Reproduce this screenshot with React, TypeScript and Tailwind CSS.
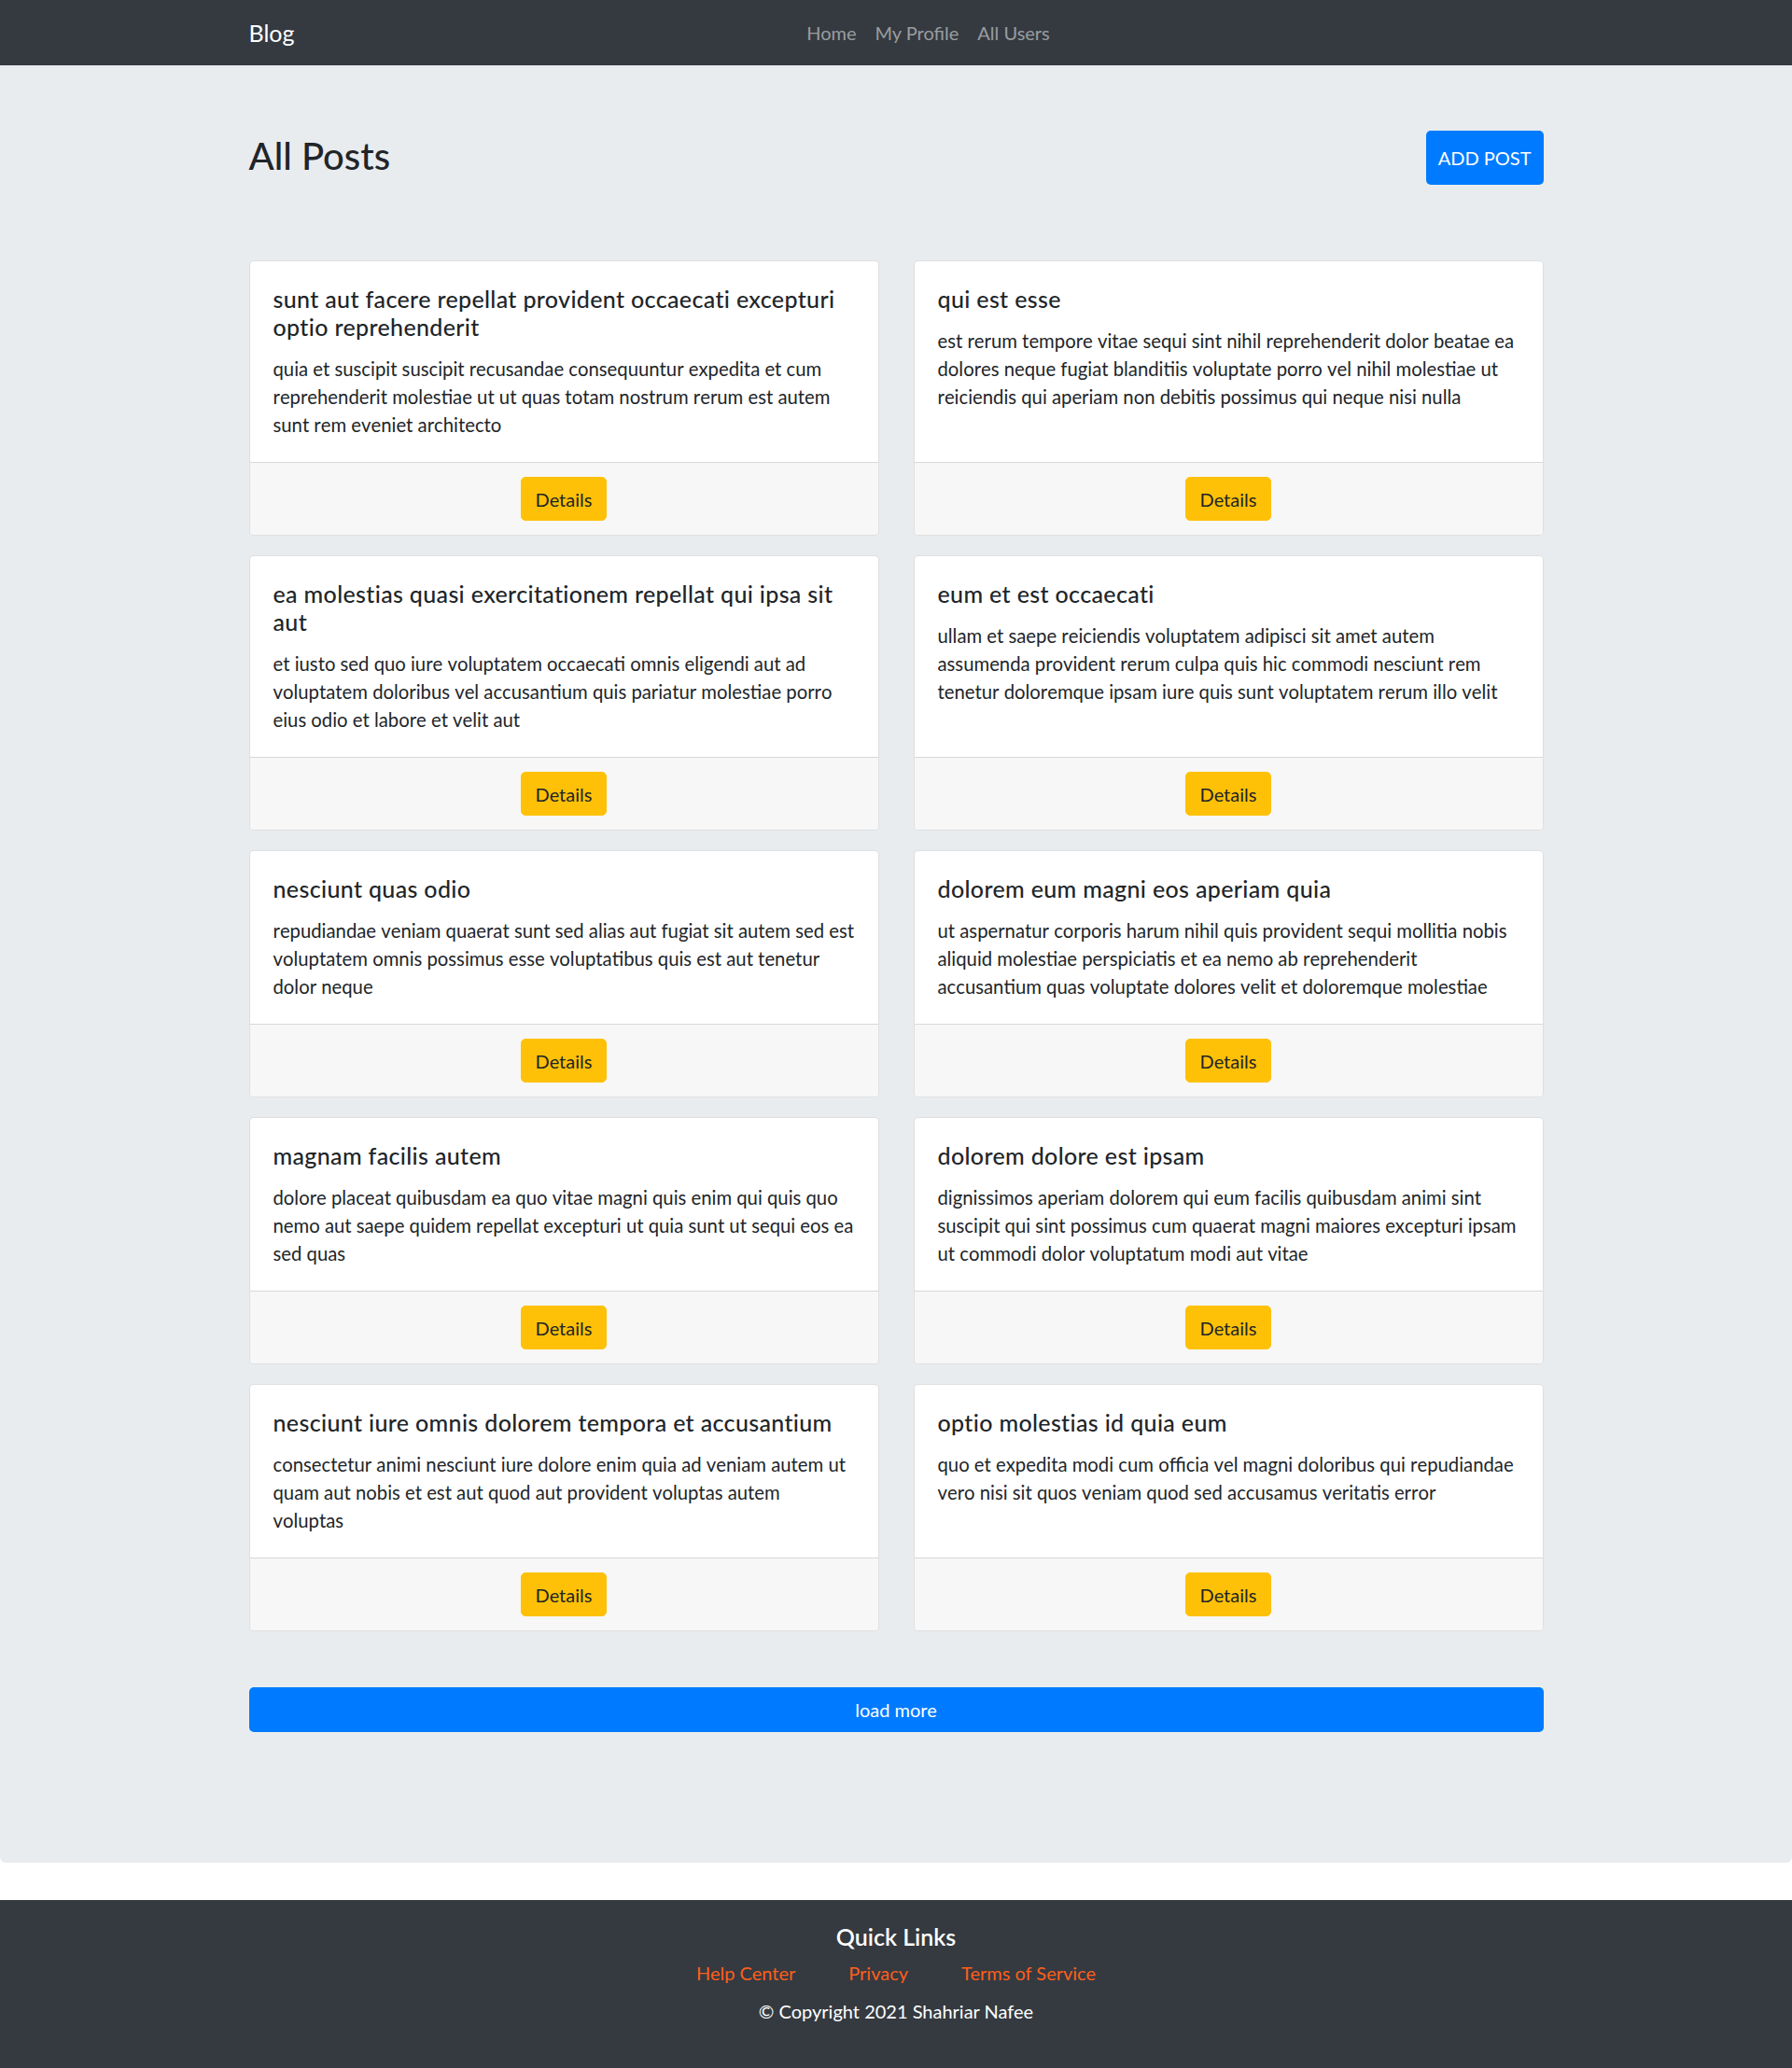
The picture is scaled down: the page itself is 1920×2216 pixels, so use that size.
import React from 'react';

const posts = [
  {
    title: 'sunt aut facere repellat provident occaecati excepturi optio reprehenderit',
    body: 'quia et suscipit suscipit recusandae consequuntur expedita et cum reprehenderit molestiae ut ut quas totam nostrum rerum est autem sunt rem eveniet architecto',
  },
  {
    title: 'qui est esse',
    body: 'est rerum tempore vitae sequi sint nihil reprehenderit dolor beatae ea dolores neque fugiat blanditiis voluptate porro vel nihil molestiae ut reiciendis qui aperiam non debitis possimus qui neque nisi nulla',
  },
  {
    title: 'ea molestias quasi exercitationem repellat qui ipsa sit aut',
    body: 'et iusto sed quo iure voluptatem occaecati omnis eligendi aut ad voluptatem doloribus vel accusantium quis pariatur molestiae porro eius odio et labore et velit aut',
  },
  {
    title: 'eum et est occaecati',
    body: 'ullam et saepe reiciendis voluptatem adipisci sit amet autem assumenda provident rerum culpa quis hic commodi nesciunt rem tenetur doloremque ipsam iure quis sunt voluptatem rerum illo velit',
  },
  {
    title: 'nesciunt quas odio',
    body: 'repudiandae veniam quaerat sunt sed alias aut fugiat sit autem sed est voluptatem omnis possimus esse voluptatibus quis est aut tenetur dolor neque',
  },
  {
    title: 'dolorem eum magni eos aperiam quia',
    body: 'ut aspernatur corporis harum nihil quis provident sequi mollitia nobis aliquid molestiae perspiciatis et ea nemo ab reprehenderit accusantium quas voluptate dolores velit et doloremque molestiae',
  },
  {
    title: 'magnam facilis autem',
    body: 'dolore placeat quibusdam ea quo vitae magni quis enim qui quis quo nemo aut saepe quidem repellat excepturi ut quia sunt ut sequi eos ea sed quas',
  },
  {
    title: 'dolorem dolore est ipsam',
    body: 'dignissimos aperiam dolorem qui eum facilis quibusdam animi sint suscipit qui sint possimus cum quaerat magni maiores excepturi ipsam ut commodi dolor voluptatum modi aut vitae',
  },
  {
    title: 'nesciunt iure omnis dolorem tempora et accusantium',
    body: 'consectetur animi nesciunt iure dolore enim quia ad veniam autem ut quam aut nobis et est aut quod aut provident voluptas autem voluptas',
  },
  {
    title: 'optio molestias id quia eum',
    body: 'quo et expedita modi cum officia vel magni doloribus qui repudiandae vero nisi sit quos veniam quod sed accusamus veritatis error',
  },
];

const PostCard = ({ title, body }: { title: string; body: string }) => (
  <div className="flex flex-col rounded-[5px] border border-black/[.125] bg-white">
    <div className="flex-1 p-[25px]">
      <h5 className="mb-[15px] text-[25px] font-medium leading-[30px] tracking-[0.35px]">{title}</h5>
      <p className="text-[20.3px] leading-[30px] [font-kerning:none]">{body}</p>
    </div>
    <div className="rounded-b-[5px] border-t border-black/[.125] bg-[#f7f7f7] px-[25px] py-[15px] text-center">
      <button className="rounded-[5px] border border-[#ffc107] bg-[#ffc107] px-[15px] py-[7.5px] text-[20px] leading-[30px] text-[#212529]">
        Details
      </button>
    </div>
  </div>
);

export default function App() {
  return (
    <div className="min-h-screen bg-white font-['Lato',sans-serif] text-[#212529]">
      <nav className="h-[70px] bg-[#343a40]">
        <div className="mx-auto flex h-full w-[1387px] items-center">
          <a href="#" className="mr-5 text-[25px] leading-[30px] text-white">
            Blog
          </a>
          <ul className="mx-auto flex">
            <li>
              <a href="#" className="px-[10px] text-[20px] leading-[30px] text-white/50">
                Home
              </a>
            </li>
            <li>
              <a href="#" className="px-[10px] text-[20px] leading-[30px] text-white/50">
                My Profile
              </a>
            </li>
            <li>
              <a href="#" className="px-[10px] text-[20px] leading-[30px] text-white/50">
                All Users
              </a>
            </li>
          </ul>
        </div>
      </nav>

      <main className="mb-[40px] rounded-b-[6px] bg-[#e9ecef] pb-[140px] pt-[70px]">
        <div className="mx-auto w-[1387px]">
          <div className="flex h-[58px] items-center justify-between">
            <h2 className="pb-[5px] text-[40px] font-medium leading-[48px]">All Posts</h2>
            <button className="h-[58px] rounded-[5px] bg-[#007bff] px-[13px] text-[20px] text-white">
              ADD POST
            </button>
          </div>

          <div className="mt-[81px] grid grid-cols-2 gap-x-[37px] gap-y-[21px]">
            {posts.map((p) => (
              <PostCard key={p.title} title={p.title} body={p.body} />
            ))}
          </div>

          <button className="mt-[60px] h-[48px] w-full rounded-[5px] bg-[#007bff] text-[20px] text-white">
            load more
          </button>
        </div>
      </main>

      <footer className="h-[180px] bg-[#343a40] pt-[24px] text-center">
        <h5 className="text-[25px] font-semibold leading-[30px] text-white">Quick Links</h5>
        <div className="mt-[9px] flex justify-center gap-[57px] text-[20px] leading-[30px]">
          <a href="#" className="text-[#fd5f1c]">
            Help Center
          </a>
          <a href="#" className="text-[#fd5f1c]">
            Privacy
          </a>
          <a href="#" className="text-[#fd5f1c]">
            Terms of Service
          </a>
        </div>
        <p className="mt-[11px] text-[20px] leading-[30px] text-white">© Copyright 2021 Shahriar Nafee</p>
      </footer>
    </div>
  );
}
